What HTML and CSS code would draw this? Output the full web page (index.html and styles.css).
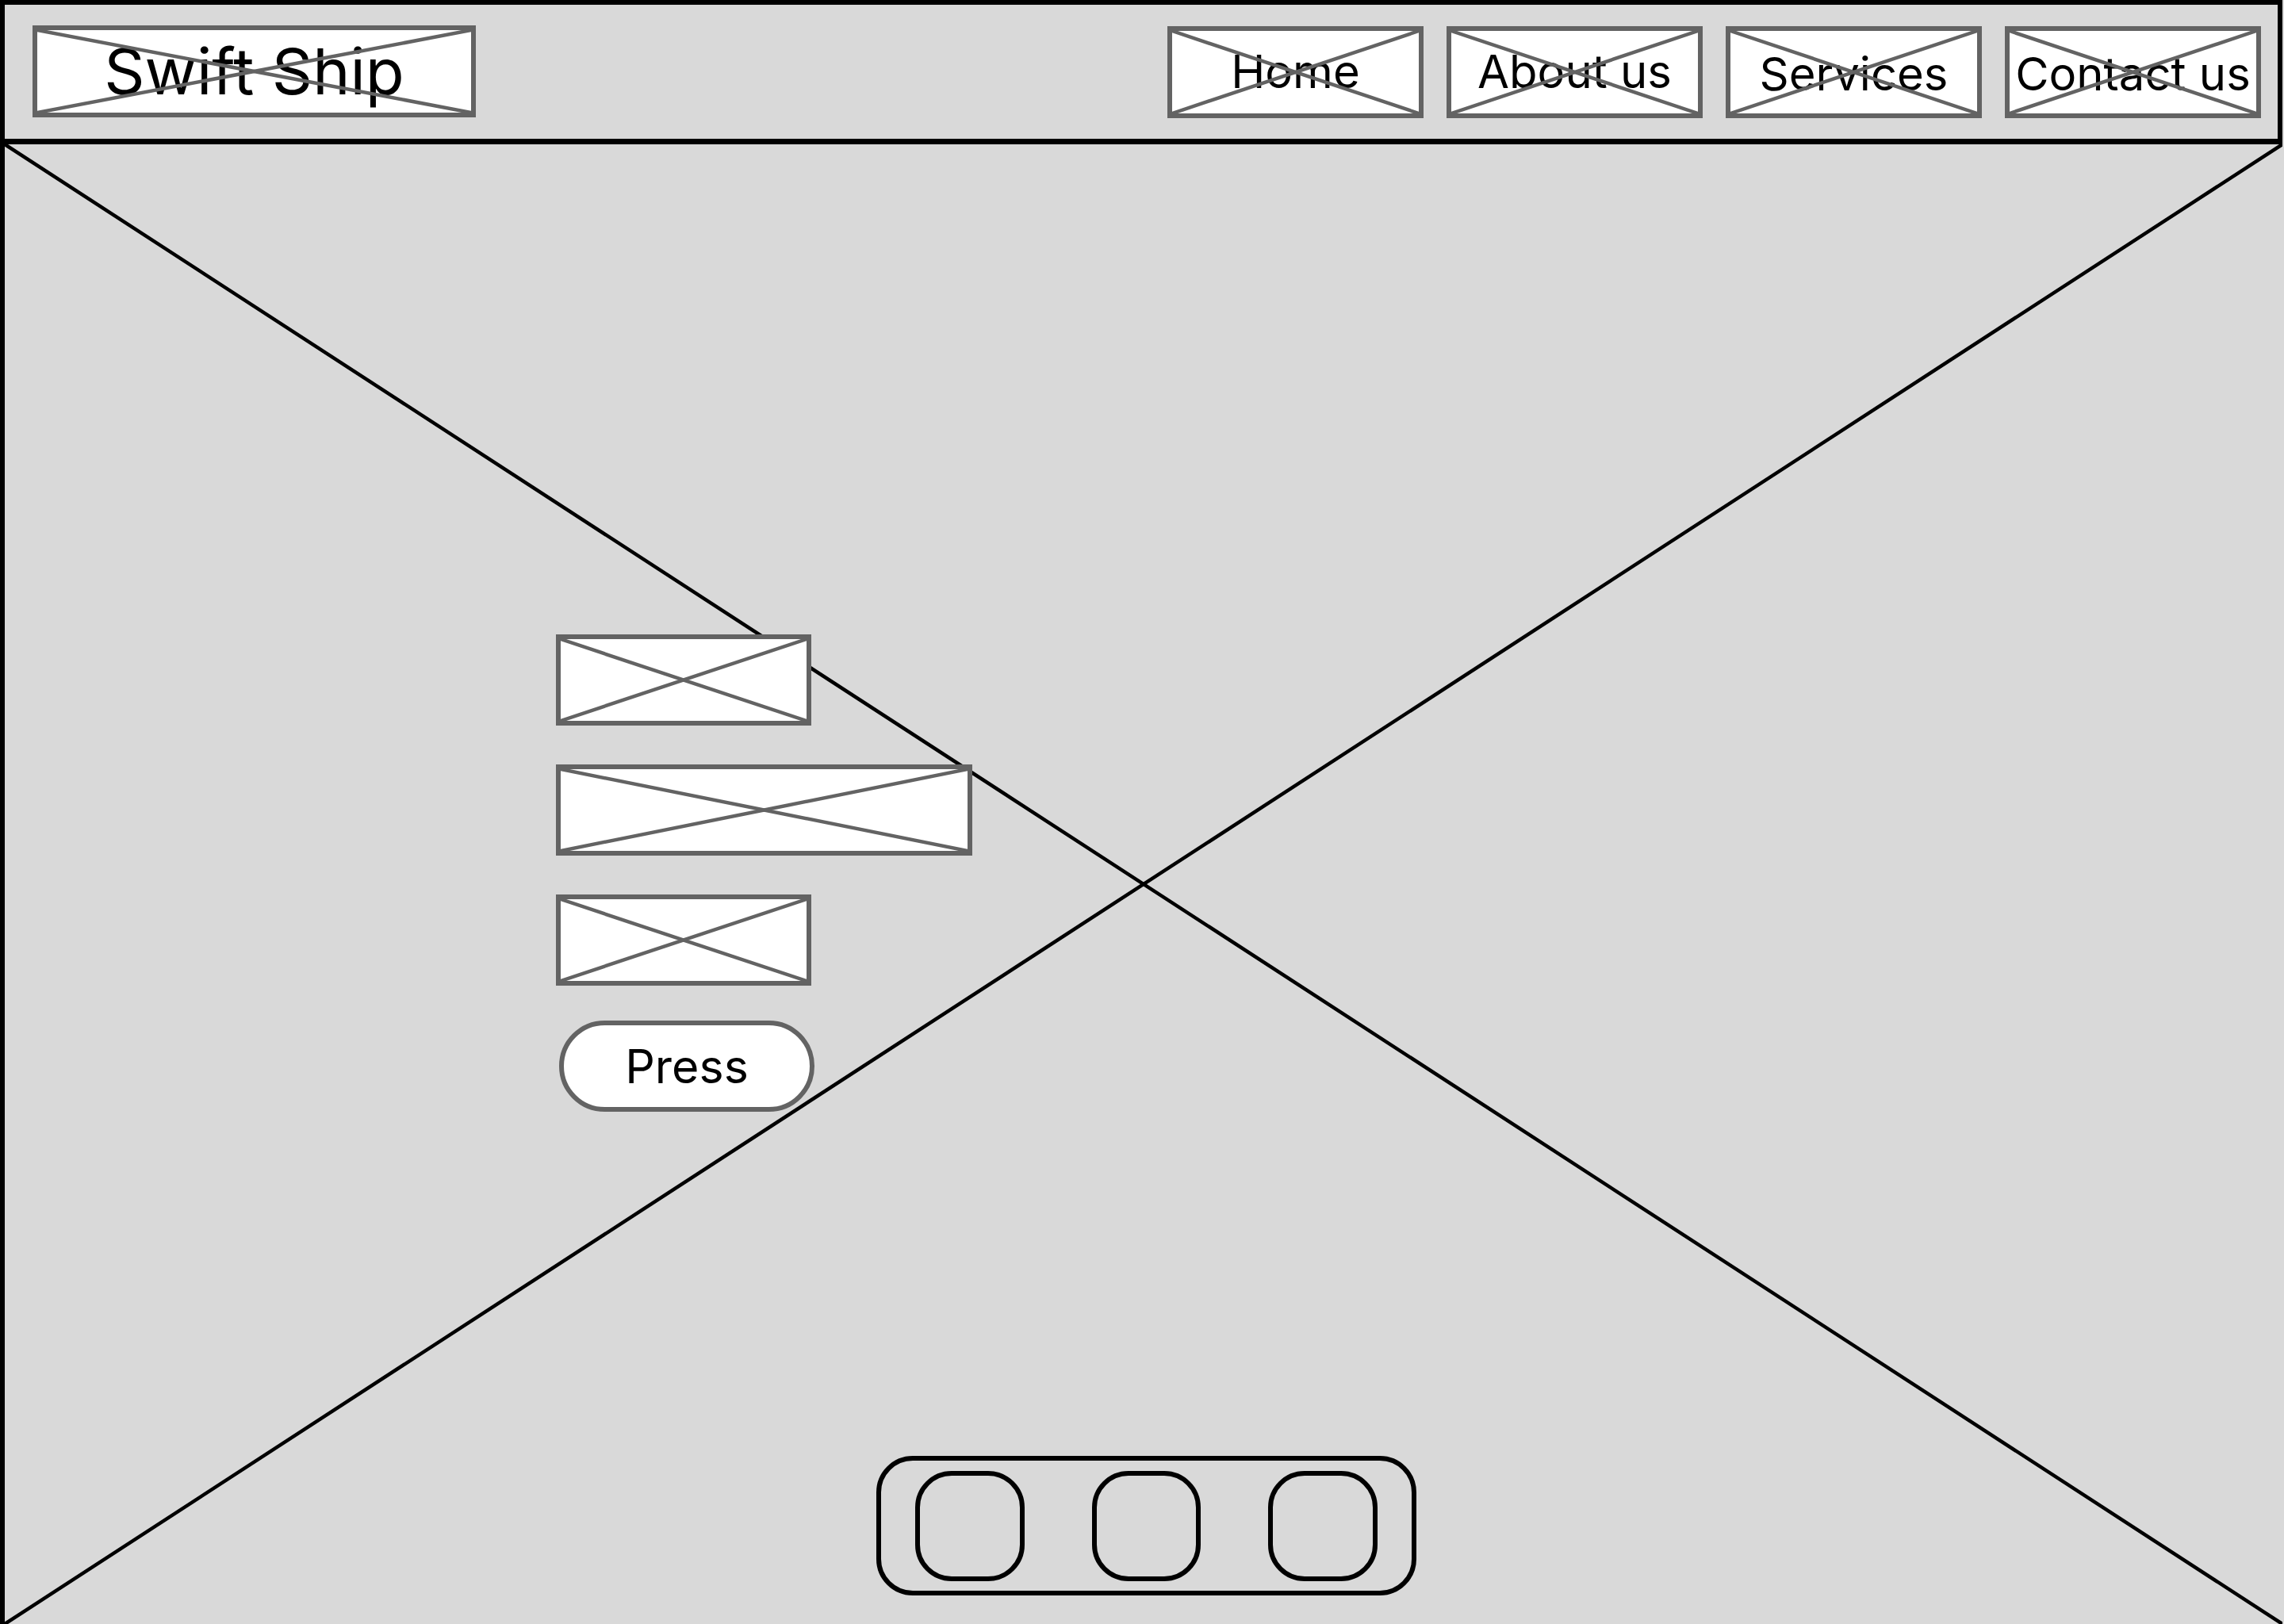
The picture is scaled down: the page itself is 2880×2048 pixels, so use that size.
FILE: index.html
```html
<!DOCTYPE html>
<html lang="en">
<head>
    <meta charset="UTF-8">
    <meta name="viewport" content="width=device-width, initial-scale=1.0">
    <title>Swift Ship</title>
    <link rel="stylesheet" href="styles.css">
</head>
<body>
    <div class="page">
        <header class="header">
            <div class="ph logo">
                <span>Swift Ship</span>
                <svg class="cross" viewBox="0 0 100 100" preserveAspectRatio="none"><line x1="0" y1="0" x2="100" y2="100"/><line x1="100" y1="0" x2="0" y2="100"/></svg>
            </div>
            <nav class="nav">
                <a class="ph nav-item" href="#">
                    <span>Home</span>
                    <svg class="cross" viewBox="0 0 100 100" preserveAspectRatio="none"><line x1="0" y1="0" x2="100" y2="100"/><line x1="100" y1="0" x2="0" y2="100"/></svg>
                </a>
                <a class="ph nav-item" href="#">
                    <span>About us</span>
                    <svg class="cross" viewBox="0 0 100 100" preserveAspectRatio="none"><line x1="0" y1="0" x2="100" y2="100"/><line x1="100" y1="0" x2="0" y2="100"/></svg>
                </a>
                <a class="ph nav-item low" href="#">
                    <span>Services</span>
                    <svg class="cross" viewBox="0 0 100 100" preserveAspectRatio="none"><line x1="0" y1="0" x2="100" y2="100"/><line x1="100" y1="0" x2="0" y2="100"/></svg>
                </a>
                <a class="ph nav-item low" href="#">
                    <span>Contact us</span>
                    <svg class="cross" viewBox="0 0 100 100" preserveAspectRatio="none"><line x1="0" y1="0" x2="100" y2="100"/><line x1="100" y1="0" x2="0" y2="100"/></svg>
                </a>
            </nav>
        </header>

        <section class="hero">
            <svg class="hero-cross" viewBox="0 0 100 100" preserveAspectRatio="none"><line x1="0" y1="0" x2="100" y2="100"/><line x1="100" y1="0" x2="0" y2="100"/></svg>
            <div class="hero-content">
                <form class="form">
                    <div class="ph field">
                        <svg class="cross" viewBox="0 0 100 100" preserveAspectRatio="none"><line x1="0" y1="0" x2="100" y2="100"/><line x1="100" y1="0" x2="0" y2="100"/></svg>
                    </div>
                    <div class="ph field wide">
                        <svg class="cross" viewBox="0 0 100 100" preserveAspectRatio="none"><line x1="0" y1="0" x2="100" y2="100"/><line x1="100" y1="0" x2="0" y2="100"/></svg>
                    </div>
                    <div class="ph field">
                        <svg class="cross" viewBox="0 0 100 100" preserveAspectRatio="none"><line x1="0" y1="0" x2="100" y2="100"/><line x1="100" y1="0" x2="0" y2="100"/></svg>
                    </div>
                    <button type="button" class="press">Press</button>
                </form>

                <div class="dots">
                    <div class="dot"></div>
                    <div class="dot"></div>
                    <div class="dot"></div>
                </div>
            </div>
        </section>
    </div>
</body>
</html>
```

FILE: styles.css
```css
body {
    margin: 0;
    padding: 0;
    background-color: #d9d9d9;
    font-family: Inter, "Noto Sans", sans-serif;
    color: #000;
    overflow: hidden;
}
.page {
    width: 2878px;
    height: 2048px;
}
.header {
    box-sizing: border-box;
    height: 182px;
    border: 6px solid #000;
    border-bottom-width: 7px;
    padding: 0 21px 0 35px;
    display: flex;
    justify-content: space-between;
    align-items: center;
}
.ph {
    position: relative;
    box-sizing: border-box;
    background-color: #fff;
    border: 6px solid #636363;
    display: flex;
    justify-content: center;
    align-items: center;
}
.ph .cross {
    position: absolute;
    top: 0;
    left: 0;
    width: 100%;
    height: 100%;
}
.cross line {
    stroke: #636363;
    stroke-width: 4.5px;
    vector-effect: non-scaling-stroke;
}
.logo {
    width: 559px;
    height: 116px;
    margin-top: -2px;
    font-size: 80px;
    line-height: 1;
}
.nav {
    display: flex;
    gap: 29px;
}
.nav-item {
    width: 323px;
    height: 116px;
    color: #000;
    text-decoration: none;
    font-size: 58px;
    line-height: 1;
    white-space: nowrap;
}
.nav-item span {
    margin-top: -2px;
}
.nav-item.low span {
    margin-top: 5px;
}
.hero {
    position: relative;
    box-sizing: border-box;
    height: 1866px;
    border-left: 6px solid #000;
}
.hero-cross {
    position: absolute;
    top: 0;
    left: 0;
    width: 100%;
    height: 100%;
}
.hero-cross line {
    stroke: #000;
    stroke-width: 4.5px;
    vector-effect: non-scaling-stroke;
}
.hero-content {
    position: relative;
    height: 100%;
    box-sizing: border-box;
    padding: 618px 0 36px 695px;
    display: flex;
    flex-direction: column;
}
.form {
    display: flex;
    flex-direction: column;
    align-items: flex-start;
}
.field {
    width: 322px;
    height: 115px;
    margin-bottom: 49px;
}
.field.wide {
    width: 525px;
}
.press {
    box-sizing: border-box;
    width: 322px;
    height: 115px;
    margin: -5px 0 0 4px;
    background-color: #fff;
    border: 6px solid #636363;
    border-radius: 58px;
    font-family: Inter, "Noto Sans", sans-serif;
    font-size: 59px;
    color: #000;
    padding: 0;
    cursor: pointer;
}
.dots {
    box-sizing: border-box;
    margin: auto 0 0 404px;
    width: 681px;
    height: 176px;
    border: 6px solid #000;
    border-radius: 46px;
    padding: 12px 43px;
    display: flex;
    gap: 85px;
    align-items: center;
}
.dot {
    box-sizing: border-box;
    width: 138px;
    height: 139px;
    border: 6px solid #000;
    border-radius: 46px;
}
```
